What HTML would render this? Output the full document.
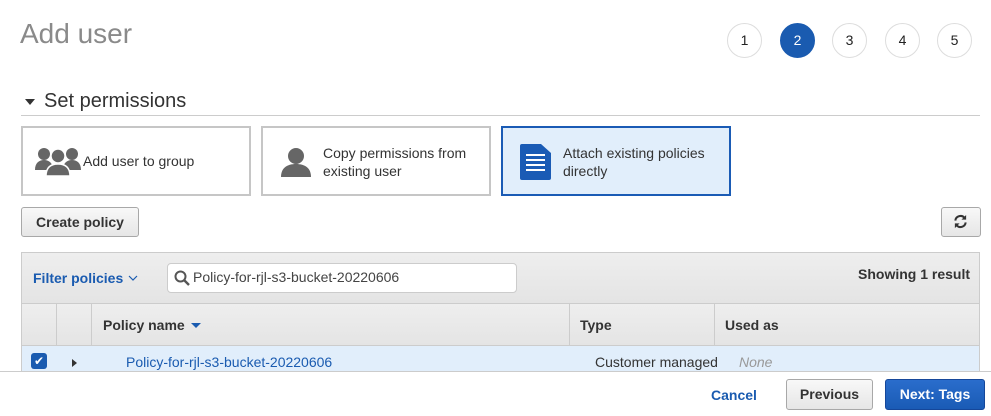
<!DOCTYPE html>
<html><head><meta charset="utf-8"><style>
*{box-sizing:border-box;margin:0;padding:0}
body{width:991px;height:416px;overflow:hidden;background:#fff;font-family:"Liberation Sans",Arial,sans-serif;color:#333;position:relative}
.a{position:absolute}
.c{position:absolute;top:23px;width:35px;height:35px;border-radius:50%;border:1px solid #ddd;font-size:14px;text-align:center;line-height:33px;color:#222;background:#fff}
.card{position:absolute;top:126px;height:70px;width:230px;border:2px solid #c6c6c6;background:#fff;font-size:14px;color:#333}
.btn{position:absolute;border:1px solid #a8a8a8;border-radius:3px;background:linear-gradient(#f8f8f8,#e6e6e6);font-weight:bold;font-size:14px;color:#333;text-align:center}
</style></head><body>
<div class="a" style="left:20px;top:18px;font-size:28px;color:#8a8a8a">Add user</div>
<div class="c" style="left:727px">1</div>
<div class="c" style="left:780px;background:#1a5bb0;border-color:#1a5bb0;color:#fff">2</div>
<div class="c" style="left:832px">3</div>
<div class="c" style="left:885px">4</div>
<div class="c" style="left:937px">5</div>
<div class="a" style="left:25px;top:99px;width:0;height:0;border-left:5px solid transparent;border-right:5px solid transparent;border-top:6px solid #333"></div>
<div class="a" style="left:44px;top:90px;font-size:20px;color:#333">Set permissions</div>
<div class="a" style="left:21px;top:115px;width:959px;height:1px;background:#ccc"></div>

<div class="card" style="left:21px">
<svg class="a" style="left:12px;top:18px" width="46" height="30" viewBox="0 0 46 30" fill="#666"><circle cx="9" cy="8" r="6"/><circle cx="37" cy="8" r="6"/><path d="M0 24c0-7 4-10 9-10s9 3 9 10z M28 24c0-7 4-10 9-10s9 3 9 10z"/><circle cx="23" cy="10" r="7" stroke="#fff" stroke-width="1.5"/><path d="M11 30c0-9 5-12 12-12s12 3 12 12z" stroke="#fff" stroke-width="1.5"/></svg>
<div class="a" style="left:60px;top:25px">Add user to group</div></div>
<div class="card" style="left:261px">
<svg class="a" style="left:17px;top:18px" width="32" height="32" viewBox="0 0 32 32" fill="#666"><circle cx="16" cy="10" r="8"/><path d="M1 31c0-9 6-13 15-13s15 4 15 13z"/></svg>
<div class="a" style="left:60px;top:16px;line-height:18px">Copy permissions from<br>existing user</div></div>
<div class="card" style="left:501px;border-color:#1a5bb5;background:#e1eefb">
<svg class="a" style="left:17px;top:16px" width="31" height="36" viewBox="0 0 31 36"><path d="M2 0h19l10 9v25a2 2 0 0 1-2 2H2a2 2 0 0 1-2-2V2a2 2 0 0 1 2-2z" fill="#1a5bb5"/><g stroke="#fff" stroke-width="2"><path d="M6 11h19M6 16h19M6 21h19M6 26h19"/></g></svg>
<div class="a" style="left:60px;top:16px;line-height:18px">Attach existing policies<br>directly</div></div>

<div class="btn" style="left:21px;top:207px;width:118px;height:30px;line-height:28px">Create policy</div>
<div class="btn" style="left:941px;top:207px;width:40px;height:30px"></div>
<svg class="a" style="left:953px;top:214px" width="15" height="15" viewBox="0 0 16 16" fill="none" stroke="#333" stroke-width="2.2"><path d="M2.5 7A5.5 5.5 0 0 1 12.5 4.5"/><path d="M13.5 9A5.5 5.5 0 0 1 3.5 11.5"/><path d="M14 1v5h-5z M2 15v-5h5z" fill="#333" stroke="none"/></svg>

<div class="a" style="left:21px;top:252px;width:959px;height:120px;border:1px solid #ccc;border-bottom:none;background:#ebebeb"></div>
<div class="a" style="left:22px;top:253px;width:957px;height:50px;background:linear-gradient(#eee,#e4e4e4)"></div>
<div class="a" style="left:33px;top:270px;font-size:14px;font-weight:bold;color:#1a5bb0">Filter policies</div>
<svg class="a" style="left:128px;top:275px" width="10" height="6" viewBox="0 0 10 6"><path d="M1 1l4 4 4-4" fill="none" stroke="#1a5bb0" stroke-width="1.2"/></svg>
<div class="a" style="left:167px;top:263px;width:350px;height:30px;background:#fff;border:1px solid #ccc;border-radius:4px"></div>
<svg class="a" style="left:174px;top:270px" width="16" height="16" viewBox="0 0 16 16"><circle cx="6.5" cy="6.5" r="5" fill="none" stroke="#555" stroke-width="2"/><path d="M10 10l5 5" stroke="#555" stroke-width="2.4"/></svg>
<div class="a" style="left:193px;top:269px;font-size:14px;color:#444">Policy-for-rjl-s3-bucket-20220606</div>
<div class="a" style="left:858px;top:266px;font-size:14px;font-weight:bold;color:#333">Showing 1 result</div>
<div class="a" style="left:22px;top:303px;width:957px;height:1px;background:#ccc"></div>
<div class="a" style="left:22px;top:304px;width:957px;height:42px;background:linear-gradient(#eee,#e4e4e4)"></div>
<div class="a" style="left:56px;top:304px;width:1px;height:42px;background:#ccc"></div>
<div class="a" style="left:91px;top:304px;width:1px;height:42px;background:#ccc"></div>
<div class="a" style="left:569px;top:304px;width:1px;height:42px;background:#ccc"></div>
<div class="a" style="left:714px;top:304px;width:1px;height:42px;background:#ccc"></div>
<div class="a" style="left:103px;top:317px;font-size:14px;font-weight:bold">Policy name</div>
<div class="a" style="left:191px;top:323px;width:0;height:0;border-left:5px solid transparent;border-right:5px solid transparent;border-top:5px solid #1a5bb0"></div>
<div class="a" style="left:580px;top:317px;font-size:14px;font-weight:bold">Type</div>
<div class="a" style="left:725px;top:317px;font-size:14px;font-weight:bold">Used as</div>
<div class="a" style="left:22px;top:345px;width:957px;height:1px;background:#ccc"></div>
<div class="a" style="left:22px;top:346px;width:957px;height:26px;background:#e1eefb"></div>
<div class="a" style="left:31px;top:353px;width:16px;height:16px;border-radius:3px;background:#1a5bb0;color:#fff;font-size:12px;text-align:center;line-height:16px">&#10004;</div>
<div class="a" style="left:72px;top:359px;width:0;height:0;border-top:4px solid transparent;border-bottom:4px solid transparent;border-left:5px solid #333"></div>
<div class="a" style="left:126px;top:354px;font-size:14px;color:#1a5bb0">Policy-for-rjl-s3-bucket-20220606</div>
<div class="a" style="left:595px;top:354px;font-size:14px;color:#333">Customer managed</div>
<div class="a" style="left:739px;top:354px;font-size:14px;color:#999;font-style:italic">None</div>

<div class="a" style="left:0;top:371px;width:991px;height:45px;background:#fff;border-top:1px solid #ccc"></div>
<div class="a" style="left:711px;top:387px;font-size:14px;font-weight:bold;color:#1a5bb0">Cancel</div>
<div class="btn" style="left:786px;top:379px;width:87px;height:31px;line-height:29px">Previous</div>
<div class="btn" style="left:885px;top:379px;width:100px;height:31px;line-height:29px;background:linear-gradient(#2a6dcc,#1a5bb5);border-color:#15479a;color:#fff">Next: Tags</div>
</body></html>
